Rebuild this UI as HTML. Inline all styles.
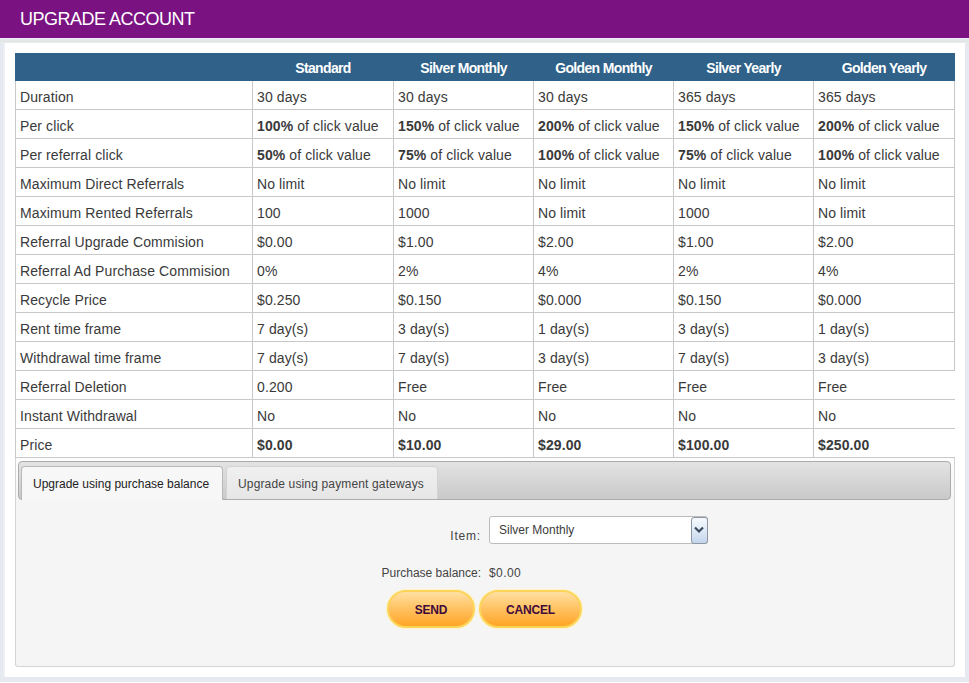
<!DOCTYPE html>
<html><head><meta charset="utf-8">
<style>
*{box-sizing:border-box;margin:0;padding:0}
html,body{width:969px;height:683px;overflow:hidden;background:#e6eaf0;font-family:"Liberation Sans",sans-serif}
#hdr{position:absolute;left:0;top:0;width:969px;height:38px;background:#7a1282;color:#fff;font-size:18px;letter-spacing:-0.5px;line-height:38px;padding-left:20px}
#strip{position:absolute;left:0;top:38px;width:969px;height:5px;background:linear-gradient(#f1ecf8 0,#f1ecf8 1px,#e0e9ea 1px,#e3e7e4 4px,#eef0f2 5px)}
#box{position:absolute;left:5px;top:43px;width:960px;height:634px;background:#fff}
table{position:absolute;left:15px;top:53px;border-collapse:collapse;font-size:14px;color:#3a3a3a}
th{background:#2f6189;color:#fff;font-weight:bold;height:27px;font-size:14px;letter-spacing:-0.65px;padding-top:4px;border-bottom:1px solid #2f6189}
td{border:1px solid #c8c8c8;height:29px;padding-left:4px;padding-top:4px;letter-spacing:0.1px}
tr.nr td:last-child{border-right-color:#fff}
#tabs{position:absolute;left:15px;top:458px;width:940px;height:209px;background:linear-gradient(#fdfdfd,#f5f5f5 44px);border:1px solid #d4d4d4;border-top:none;border-radius:0 0 3px 3px}
#nav{position:absolute;left:18px;top:461px;width:933px;height:39px;border:1px solid #acacac;border-radius:4px;background:linear-gradient(#e3e3e3,#c9c9c9)}
.tab{position:absolute;top:466px;height:34px;font-size:12px;color:#222;border:1px solid #b8b8b8;border-bottom:none;border-radius:4px 4px 0 0;padding-left:11px;line-height:34px}
#t1{left:21px;width:202px;background:#f7f7f7}
#t2{left:226px;width:212px;height:33px;letter-spacing:0.15px;background:linear-gradient(#f0f0f0,#e6e6e6);border-color:#d3d3d3;color:#444}
.lbl{position:absolute;font-size:12px;color:#444;text-align:right}
#sel{position:absolute;left:489px;top:516px;width:219px;height:28px;border:1px solid #bcbcbc;border-radius:3px;background:#fff;font-size:12px;color:#3c3c3c;padding-left:9px;line-height:26px}
#dd{position:absolute;left:201px;top:0px;width:17px;height:27px;border:1px solid #8d96a2;border-radius:3px;background:linear-gradient(#f7fafe,#dfe9f6 50%,#c3d5ec)}#dd svg{position:absolute;left:2px;top:8px}
.btn{position:absolute;top:590px;height:38px;border-radius:19px;border:2px solid #fbd458;box-shadow:0 0 1px 1px #fff3c8;background:linear-gradient(#ffe0a2,#ffc160 50%,#ffa526);color:#3f0a3c;font-weight:bold;font-size:12px;letter-spacing:-0.2px;text-align:center;line-height:36px}
</style></head><body>
<div id="hdr">UPGRADE ACCOUNT</div>
<div id="strip"></div>
<div id="box"></div><div style="position:absolute;left:0;top:682px;width:969px;height:1px;background:#fbfbfd"></div><div style="position:absolute;left:3px;top:43px;width:2px;height:634px;background:#eceff4"></div>
<table>
<tr><th style="width:237px;border-left:1px solid #2f6189"></th><th style="width:141px">Standard</th><th style="width:140px">Silver Monthly</th><th style="width:140px">Golden Monthly</th><th style="width:140px">Silver Yearly</th><th style="width:141px">Golden Yearly</th></tr>
<tr><td>Duration</td><td>30 days</td><td>30 days</td><td>30 days</td><td>365 days</td><td>365 days</td></tr>
<tr><td>Per click</td><td><b>100%</b> of click value</td><td><b>150%</b> of click value</td><td><b>200%</b> of click value</td><td><b>150%</b> of click value</td><td><b>200%</b> of click value</td></tr>
<tr><td>Per referral click</td><td><b>50%</b> of click value</td><td><b>75%</b> of click value</td><td><b>100%</b> of click value</td><td><b>75%</b> of click value</td><td><b>100%</b> of click value</td></tr>
<tr><td>Maximum Direct Referrals</td><td>No limit</td><td>No limit</td><td>No limit</td><td>No limit</td><td>No limit</td></tr>
<tr><td>Maximum Rented Referrals</td><td>100</td><td>1000</td><td>No limit</td><td>1000</td><td>No limit</td></tr>
<tr><td>Referral Upgrade Commision</td><td>$0.00</td><td>$1.00</td><td>$2.00</td><td>$1.00</td><td>$2.00</td></tr>
<tr><td>Referral Ad Purchase Commision</td><td>0%</td><td>2%</td><td>4%</td><td>2%</td><td>4%</td></tr>
<tr><td>Recycle Price</td><td>$0.250</td><td>$0.150</td><td>$0.000</td><td>$0.150</td><td>$0.000</td></tr>
<tr><td>Rent time frame</td><td>7 day(s)</td><td>3 day(s)</td><td>1 day(s)</td><td>3 day(s)</td><td>1 day(s)</td></tr>
<tr><td>Withdrawal time frame</td><td>7 day(s)</td><td>7 day(s)</td><td>3 day(s)</td><td>7 day(s)</td><td>3 day(s)</td></tr>
<tr class="nr"><td>Referral Deletion</td><td>0.200</td><td>Free</td><td>Free</td><td>Free</td><td>Free</td></tr>
<tr class="nr"><td>Instant Withdrawal</td><td>No</td><td>No</td><td>No</td><td>No</td><td>No</td></tr>
<tr class="nr"><td>Price</td><td><b>$0.00</b></td><td><b>$10.00</b></td><td><b>$29.00</b></td><td><b>$100.00</b></td><td><b>$250.00</b></td></tr>
</table>
<div id="tabs"></div>
<div id="nav"></div>
<div class="tab" id="t1">Upgrade using purchase balance</div>
<div class="tab" id="t2">Upgrade using payment gateways</div>
<div class="lbl" style="left:400px;top:529px;width:81px;letter-spacing:0.8px">Item:</div>
<div id="sel">Silver Monthly<div id="dd"><svg width="10" height="8" viewBox="0 0 10 8"><path d="M1 1.5 L5 5.5 L9 1.5" fill="none" stroke="#3b4a5e" stroke-width="2.2"/></svg></div></div>
<div class="lbl" style="left:361px;top:566px;width:120px">Purchase balance:</div>
<div class="lbl" style="left:489px;top:566px;text-align:left;letter-spacing:0.4px">$0.00</div>
<div class="btn" style="left:387px;width:88px">SEND</div>
<div class="btn" style="left:479px;width:103px">CANCEL</div>
</body></html>
